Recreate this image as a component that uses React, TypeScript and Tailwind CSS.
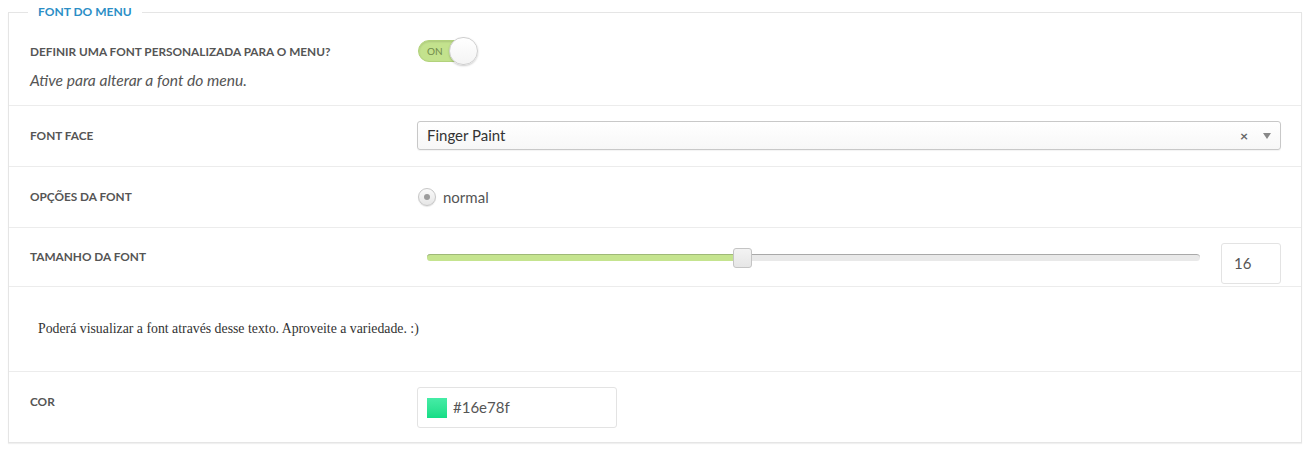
import React from "react";

const labelCls =
  "w-[387px] shrink-0 pl-[21px] text-[11.8px] leading-4 font-bold uppercase text-[#555]";

function Toggle() {
  return (
    <div className="relative w-[60px] h-[28px]">
      <div className="absolute left-0 top-[3px] w-[56px] h-[22px] rounded-full bg-[#c3e28d] border border-[#b2d27c] shadow-[inset_0_1px_2px_rgba(0,0,0,0.12)]">
        <span className="absolute left-[8px] top-[3px] text-[10px] leading-[14px] text-[#718a4a]">ON</span>
      </div>
      <div className="absolute right-0 top-0 w-[29px] h-[28px] rounded-full bg-gradient-to-b from-white to-[#f4f4f4] border border-[#cfcfcf] shadow-[0_1px_2px_rgba(0,0,0,0.2)]" />
    </div>
  );
}

export default function App() {
  return (
    <div className="w-[1316px] h-[454px] bg-white pl-[8px] pr-[14px] pt-[12px] font-['Lato','Noto_Sans',sans-serif]">
      <div className="relative border border-[#e5e5e5] shadow-[0_1px_1px_rgba(0,0,0,0.06)] bg-white">
        <span className="absolute left-[19px] -top-[9px] px-[10px] bg-white text-[12px] leading-4 font-bold uppercase text-[#2b8ec6]">
          Font do menu
        </span>

        {/* row 1 */}
        <div className="flex h-[92px]">
          <div className={labelCls + " pt-[31px]"}>
            Definir uma font personalizada para o menu?
            <div className="mt-[10px] text-[15.6px] leading-5 font-normal italic normal-case text-[#555]">
              Ative para alterar a font do menu.
            </div>
          </div>
          <div className="pt-[24px] pl-[22px]">
            <Toggle />
          </div>
        </div>

        {/* row 2 */}
        <div className="flex h-[61px] border-t border-[#ececec]">
          <div className={labelCls + " pt-[22px]"}>Font face</div>
          <div className="flex-1 pt-[15px] pl-[21px] pr-[20px]">
            <div className="flex items-center h-[29px] border border-[#c8c8c8] rounded-[3px] bg-gradient-to-b from-white to-[#f7f7f7] shadow-[0_1px_1px_rgba(0,0,0,0.05)] pl-[9px] pr-[9px]">
              <span className="flex-1 text-[15px] text-[#333]">Finger Paint</span>
              <span className="text-[14px] leading-none font-bold text-[#666] mr-[15px]">×</span>
              <svg width="8" height="6" viewBox="0 0 8 6">
                <path d="M0 0 L8 0 L4 6 Z" fill="#888" />
              </svg>
            </div>
          </div>
        </div>

        {/* row 3 */}
        <div className="flex h-[61px] border-t border-[#ececec]">
          <div className={labelCls + " pt-[22px]"}>Opções da font</div>
          <div className="pt-[22px] pl-[22px] flex items-start gap-[7px]">
            <div className="mt-[-1px] w-[18px] h-[18px] rounded-full border border-[#c6c6c6] bg-gradient-to-b from-[#fafafa] to-[#e6e6e6] shadow-[0_1px_1px_rgba(0,0,0,0.1)] flex items-center justify-center">
              <div className="w-[6px] h-[6px] rounded-full bg-[#9c9c9c]" />
            </div>
            <span className="text-[15px] leading-4 text-[#555]">normal</span>
          </div>
        </div>

        {/* row 4 */}
        <div className="flex h-[59px] border-t border-[#ececec]">
          <div className={labelCls + " pt-[21px]"}>Tamanho da font</div>
          <div className="flex-1 flex items-start pt-[15px] pl-[21px] pr-[20px]">
            <div className="flex-1 ml-[10px] mr-[21px] mt-[11px] relative h-[7px]">
              <div className="absolute inset-0 rounded-full bg-[#e9e9e9] border-t border-[#a9a9a9]" />
              <div className="absolute left-0 top-0 bottom-0 w-[39.6%] rounded-l-full bg-[#c5e48f] border-t border-[#9fb977]" />
              <div className="absolute left-[39.6%] top-[-6px] w-[19px] h-[20px] rounded-[3px] border border-[#c4c4c4] bg-gradient-to-b from-[#f3f3f3] to-[#e6e6e6]" />
            </div>
            <div className="w-[60px] h-[41px] border border-[#e3e3e3] rounded-[3px] pl-[12px] flex items-center text-[15px] text-[#555]">
              16
            </div>
          </div>
        </div>

        {/* row 5 */}
        <div className="h-[85px] border-t border-[#ececec] pt-[32px] pl-[29px] font-['Liberation_Serif',serif] text-[13.8px] leading-5 text-[#333]">
          Poderá visualizar a font através desse texto. Aproveite a variedade. :)
        </div>

        {/* row 6 */}
        <div className="flex h-[71px] border-t border-[#ececec]">
          <div className={labelCls + " pt-[22px]"}>Cor</div>
          <div className="pt-[15px] pl-[21px]">
            <div className="w-[200px] h-[41px] border border-[#e3e3e3] rounded-[3px] flex items-center pl-[9px] gap-[6px]">
              <div className="w-[20px] h-[20px] bg-gradient-to-b from-[#45eca6] to-[#12dd86]" />
              <span className="text-[15px] text-[#555]">#16e78f</span>
            </div>
          </div>
        </div>
      </div>
    </div>
  );
}
